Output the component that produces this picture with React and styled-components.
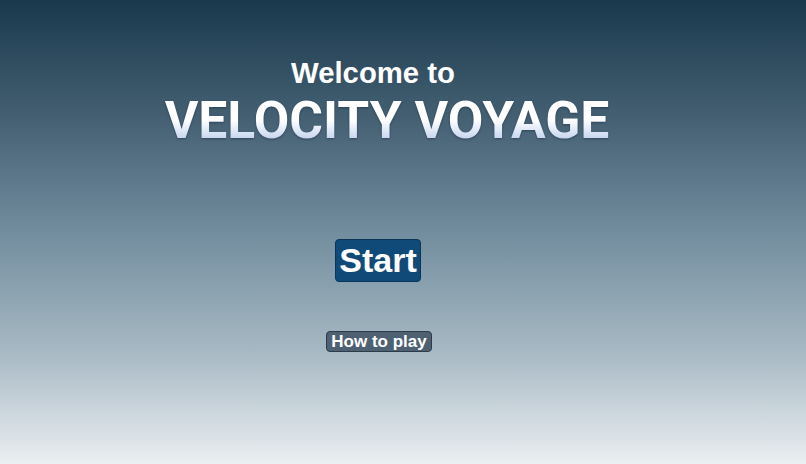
import React from "react";
import styled, { createGlobalStyle } from "styled-components";

const GlobalStyle = createGlobalStyle`
  html, body {
    margin: 0;
    padding: 0;
    height: 100%;
  }
  #root {
    height: 100%;
  }
`;

const Screen = styled.main`
  box-sizing: border-box;
  width: 100%;
  height: 100vh;
  overflow: hidden;
  background: linear-gradient(
    to bottom,
    #1a394d 0%,
    #445f72 25%,
    #728d9e 50%,
    #a5b7c2 75%,
    #ebeff2 100%
  );
  display: flex;
  flex-direction: column;
  align-items: center;
  padding: 56px 50px 0 0;
  font-family: "Liberation Sans", Arial, sans-serif;
`;

const Greeting = styled.h2`
  margin: 0 10px 0 0;
  font-size: 29.3px;
  line-height: 34px;
  font-weight: 700;
  color: #ffffff;
`;

const Title = styled.h1`
  margin: 1px 0 0 18px;
  font-family: Roboto, "Liberation Sans", sans-serif;
  font-size: 51.6px;
  line-height: 60px;
  font-weight: 700;
  color: transparent;
  background: linear-gradient(
    to bottom,
    #ffffff 0%,
    #ffffff 48%,
    #dfe8f7 66%,
    #c5d4ee 80%,
    #ffffff 100%
  );
  -webkit-background-clip: text;
  background-clip: text;
  filter: drop-shadow(0 1px 1px rgba(15, 35, 55, 0.45));
`;

const MenuButton = styled.button`
  box-sizing: border-box;
  margin: ${(p) => p.$gap}px 0 0 ${(p) => p.$shift}px;
  padding: 0 ${(p) => p.$padX}px;
  font-family: "Liberation Sans", Arial, sans-serif;
  font-weight: 700;
  font-size: ${(p) => p.$size}px;
  line-height: ${(p) => p.$lineHeight}px;
  color: #ffffff;
  background: ${(p) => p.$bg};
  border: 1px solid ${(p) => p.$border};
  border-radius: 4px;
  cursor: pointer;
`;

export default function App() {
  return (
    <>
      <GlobalStyle />
      <Screen>
        <Greeting>Welcome to</Greeting>
        <Title>VELOCITY VOYAGE</Title>
        <MenuButton
          $gap={88}
          $shift={0}
          $padX={3}
          $size={34}
          $lineHeight={41}
          $bg="#0f4a78"
          $border="#0b3558"
        >
          Start
        </MenuButton>
        <MenuButton
          $gap={49}
          $shift={2}
          $padX={4}
          $size={17}
          $lineHeight={19}
          $bg="#4d6173"
          $border="#2c3b48"
        >
          How to play
        </MenuButton>
      </Screen>
    </>
  );
}
